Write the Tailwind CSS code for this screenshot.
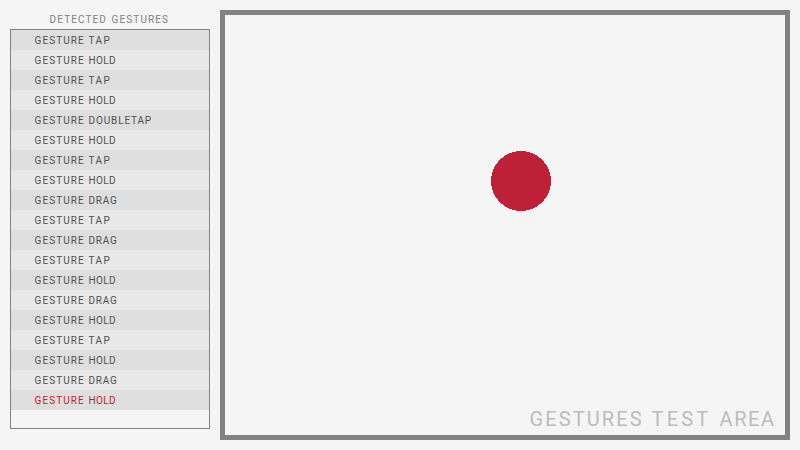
<!DOCTYPE html>
<html lang="en">
<head>
<meta charset="utf-8">
<title>Gestures</title>
<script src="https://cdn.jsdelivr.net/npm/@tailwindcss/browser@4"></script>
</head>
<body class="bg-[#f5f5f5] font-['Roboto','Liberation_Sans',sans-serif]">
<main class="flex w-[800px] h-[450px] overflow-hidden p-2.5 gap-2.5">
  <aside class="w-[200px] shrink-0">
    <h1 class="flex h-[19px] pl-[39.6px] text-[10px] leading-[20px] text-[#828282]">
      <span class="w-[62px] tracking-[1.1px]">DETECTED</span>
      <span class="tracking-[1.1px]">GESTURES</span>
    </h1>
    <ul id="log" class="h-[400px] border border-[#828282] text-[10px] leading-[22px] text-[#505050]"></ul>
  </aside>
  <section class="relative flex w-[570px] h-[430px] border-5 border-[#828282] items-end justify-end">
    <svg class="absolute left-[266px] top-[136px] size-[60px]" viewBox="0 0 60 60" shape-rendering="crispEdges"><circle cx="30" cy="30" r="30" fill="#be2137"/></svg>
    <h2 class="flex h-[28px] w-[255.5px] text-[20px] leading-[24px] text-[#bcbcbc]">
      <span class="w-[122px] shrink-0 tracking-[2.1px]">GESTURES</span>
      <span class="w-[68px] shrink-0 tracking-[3.2px]">TEST</span>
      <span class="tracking-[1.6px]">AREA</span>
    </h2>
  </section>
</main>
<script>
const spacing = {
  TAP: 'tracking-[1.4px]',
  HOLD: 'tracking-[0.3px]',
  DRAG: 'tracking-[0.7px]',
  DOUBLETAP: 'tracking-[0.85px]'
};
const events = 'TAP HOLD TAP HOLD DOUBLETAP HOLD TAP HOLD DRAG TAP DRAG TAP HOLD DRAG HOLD TAP HOLD DRAG HOLD'.split(' ');
document.getElementById('log').innerHTML = events.map((name, i) => {
  const fill = i % 2 ? 'bg-[#e8e8e8]' : 'bg-[#dfdfdf]';
  const color = i === events.length - 1 ? 'text-[#be2137]' : '';
  return `<li class="flex h-5 pl-[23.6px] ${fill} ${color}"><span class="w-[54px] tracking-[1.05px]">GESTURE</span><span class="${spacing[name]}">${name}</span></li>`;
}).join('');
</script>
</body>
</html>
